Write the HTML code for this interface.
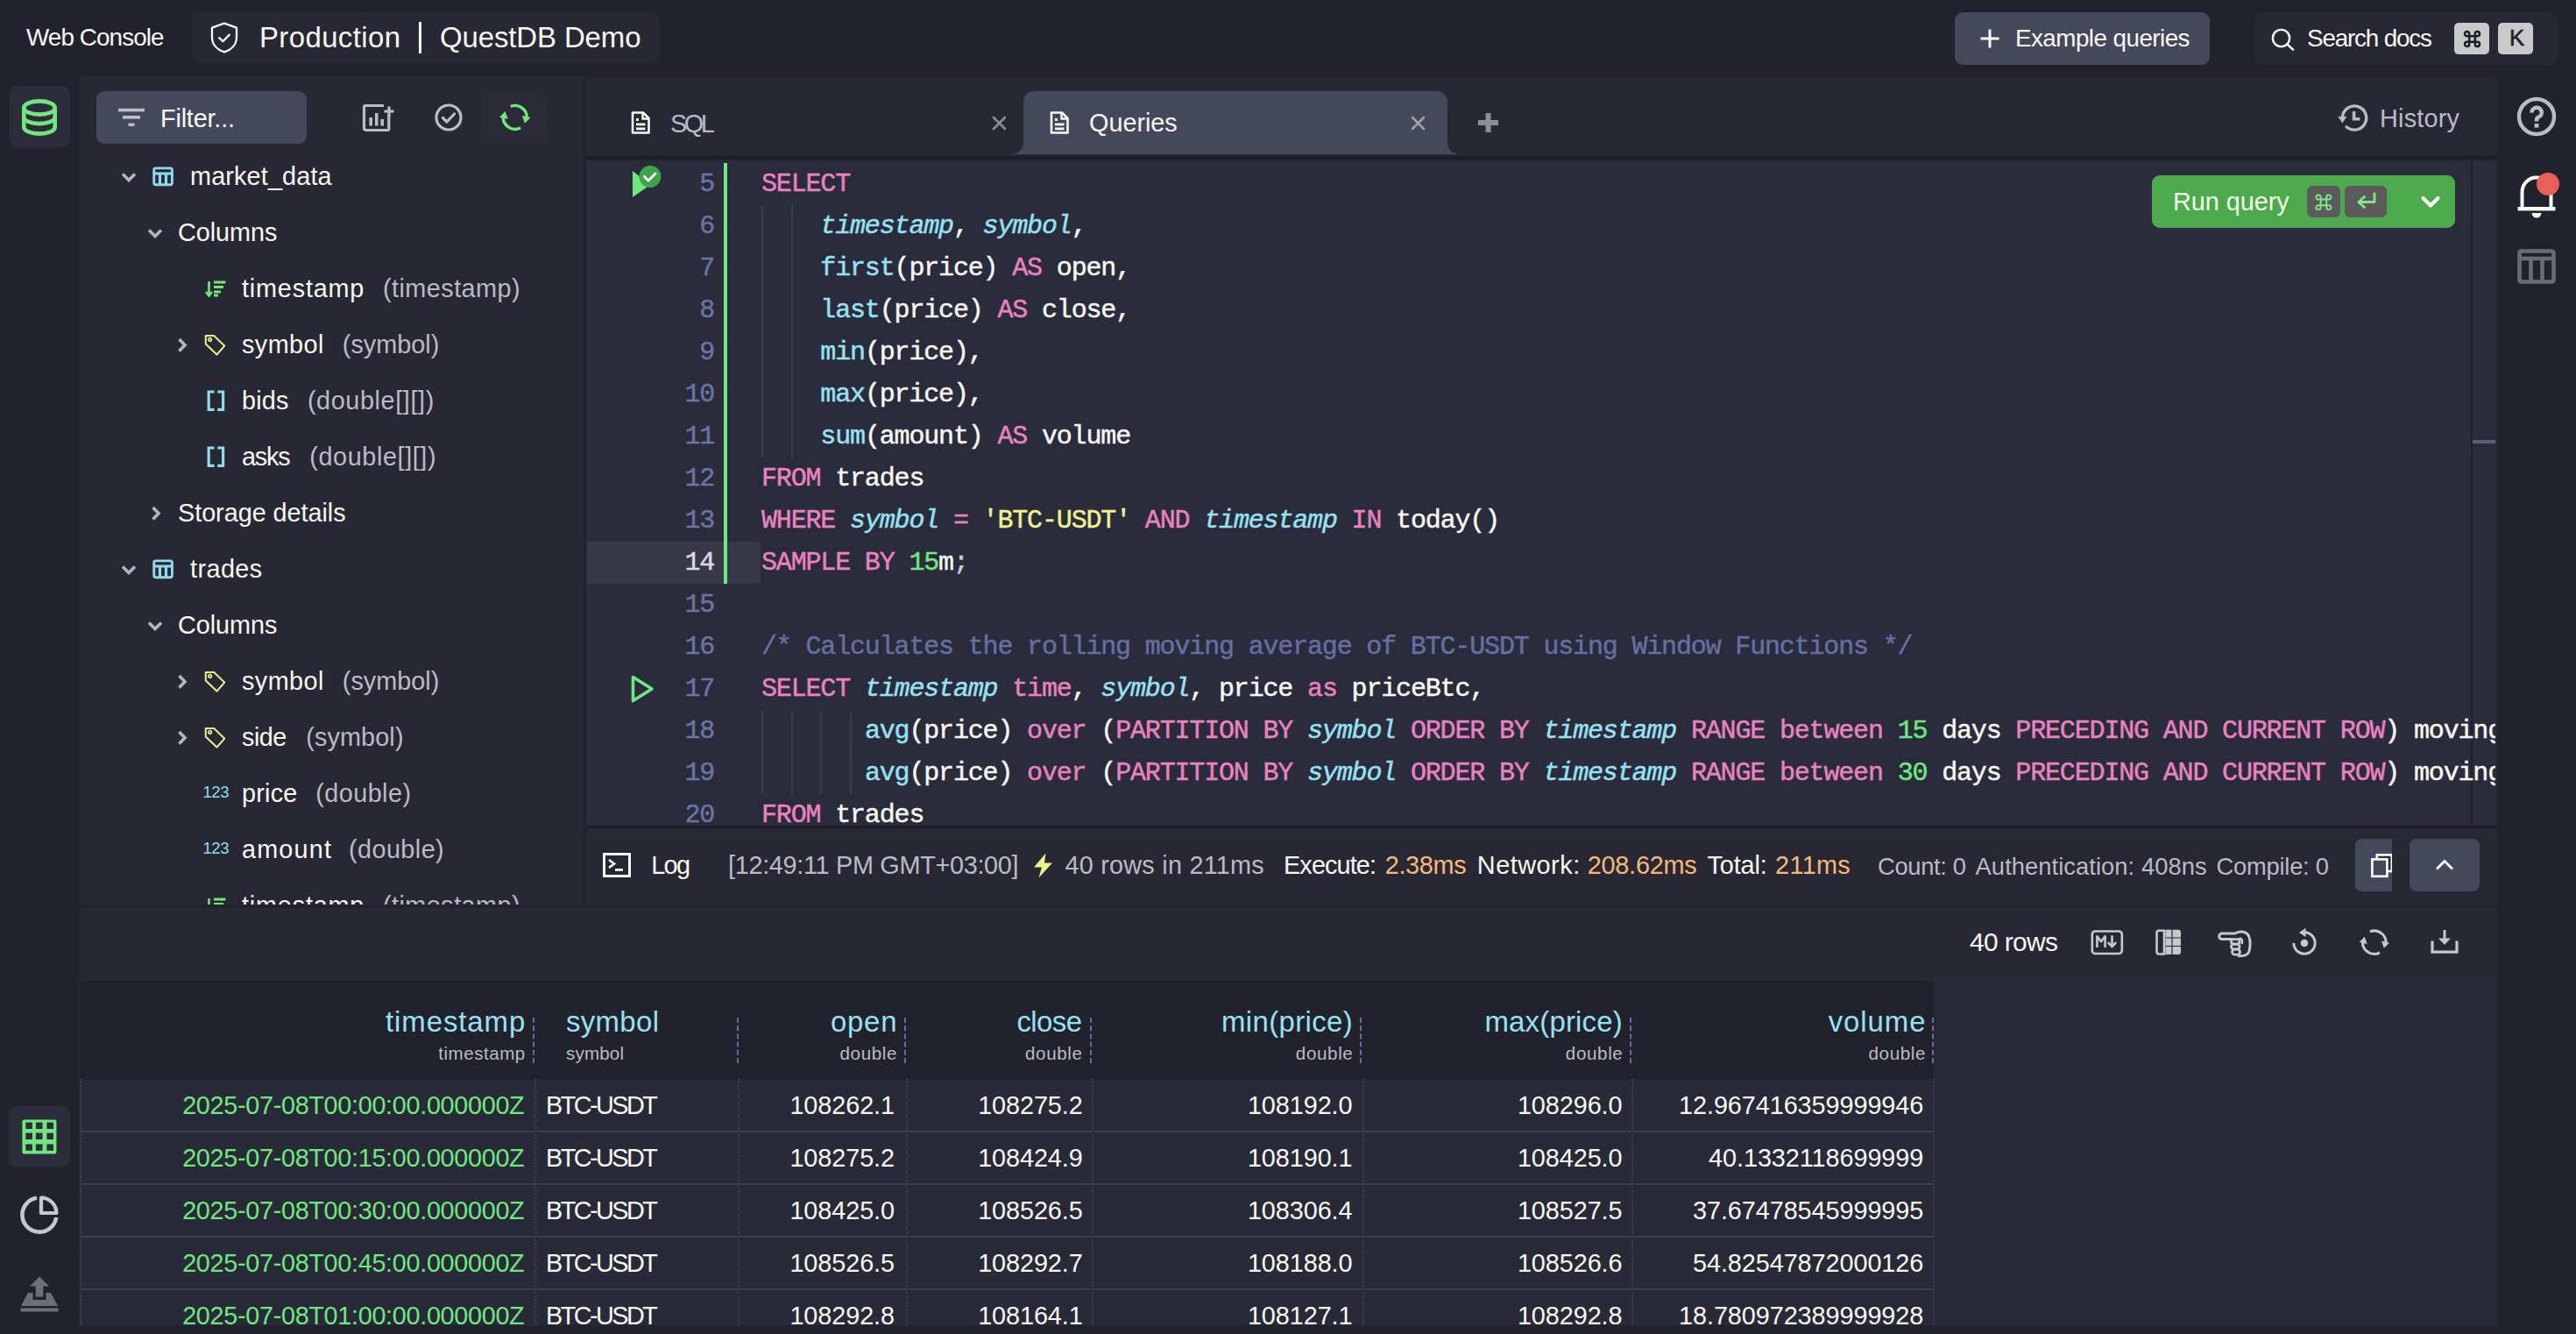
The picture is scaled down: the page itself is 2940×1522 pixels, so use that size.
<!DOCTYPE html>
<html><head><meta charset="utf-8"><style>
html,body{margin:0;padding:0;width:2940px;height:1522px;overflow:hidden;background:#21222c;}
body{position:relative;font-family:'Liberation Sans', sans-serif;}
.tx{display:block;}
</style></head><body>
<span class="tx" style="position:absolute;top:28.86px;font-family:'Liberation Sans', sans-serif;font-size:27.81px;line-height:27.81px;color:#f8f8f2;white-space:pre;letter-spacing:-0.887px;left:30px;">Web Console</span>
<div style="position:absolute;left:218px;top:13px;width:535px;height:59px;background:#272833;border-radius:10px;"></div>
<svg style="position:absolute;left:240px;top:25px;" width="32" height="36" viewBox="0 0 32 36" fill="none"><path d="M16 1.6 L30 6.6 V17.5 C30 26 23.8 31.8 16 34.4 C8.2 31.8 2 26 2 17.5 V6.6 Z" stroke="#f8f8f2" stroke-width="2.3" stroke-linejoin="round"/><path d="M10.2 18.2 L14.4 22.2 L21.8 14.6" stroke="#f8f8f2" stroke-width="2.3" stroke-linecap="round" stroke-linejoin="round"/></svg>
<span class="tx" style="position:absolute;top:26.98px;font-family:'Liberation Sans', sans-serif;font-size:32.96px;line-height:32.96px;color:#f8f8f2;white-space:pre;letter-spacing:0.383px;left:296px;">Production</span>
<div style="position:absolute;left:478px;top:25px;width:3px;height:36px;background:#f8f8f2;border-radius:0px;"></div>
<span class="tx" style="position:absolute;top:26.98px;font-family:'Liberation Sans', sans-serif;font-size:32.96px;line-height:32.96px;color:#f8f8f2;white-space:pre;letter-spacing:-0.114px;left:502px;">QuestDB Demo</span>
<div style="position:absolute;left:2231px;top:14px;width:291px;height:60px;background:#45475a;border-radius:9px;"></div>
<svg style="position:absolute;left:2259px;top:32px;" width="24" height="24" viewBox="0 0 24 24" fill="none"><path d="M12 1.5 V22.5 M1.5 12 H22.5" stroke="#f8f8f2" stroke-width="3"/></svg>
<span class="tx" style="position:absolute;top:29.86px;font-family:'Liberation Sans', sans-serif;font-size:27.81px;line-height:27.81px;color:#f8f8f2;white-space:pre;letter-spacing:-0.540px;left:2300px;">Example queries</span>
<div style="position:absolute;left:2573px;top:14px;width:346px;height:60px;background:#272833;border-radius:9px;"></div>
<svg style="position:absolute;left:2592px;top:32px;" width="28" height="26" viewBox="0 0 28 26" fill="none"><circle cx="11.5" cy="11.5" r="9.6" stroke="#f8f8f2" stroke-width="2.4"/><path d="M18.6 18.6 L25 24.6" stroke="#f8f8f2" stroke-width="2.6" stroke-linecap="round"/></svg>
<span class="tx" style="position:absolute;top:30.36px;font-family:'Liberation Sans', sans-serif;font-size:27.81px;line-height:27.81px;color:#f8f8f2;white-space:pre;letter-spacing:-1.152px;left:2633px;">Search docs</span>
<div style="position:absolute;left:2801px;top:26px;width:40px;height:36px;background:#c9c9cc;border-radius:5px;"></div>
<svg style="position:absolute;left:2811px;top:34px;" width="21" height="21" viewBox="0 0 21 21" fill="none"><path d="M7.2 7.2 H13.8 V13.8 H7.2 Z M7.2 7.2 V4.8 A2.6 2.6 0 1 0 4.6 7.2 H7.2 M13.8 7.2 H16.4 A2.6 2.6 0 1 0 13.8 4.6 V7.2 M13.8 13.8 V16.4 A2.6 2.6 0 1 0 16.4 13.8 H13.8 M7.2 13.8 H4.6 A2.6 2.6 0 1 0 7.2 16.4 V13.8" stroke="#1d1e26" stroke-width="2.5" fill="none"/></svg>
<div style="position:absolute;left:2851px;top:26px;width:40px;height:36px;background:#c9c9cc;border-radius:5px;"></div>
<span class="tx" style="position:absolute;top:31.11px;font-family:'Liberation Sans', sans-serif;font-size:25.75px;line-height:25.75px;color:#1d1e26;white-space:pre;letter-spacing:-2.181px;left:2864px;-webkit-text-stroke:0.6px #1d1e26;">K</span>
<div style="position:absolute;left:11px;top:98px;width:69px;height:70px;background:#2c2d3a;border-radius:9px;"></div>
<svg style="position:absolute;left:23px;top:111px;" width="44" height="46" viewBox="0 0 44 46" fill="none"><g transform="translate(2,2)" stroke="#72e57c" stroke-width="4.6" fill="none"><ellipse cx="20" cy="10" rx="17.7" ry="7.6"/><path d="M2.3 10 V32 A17.7 7.6 0 0 0 37.7 32 V10"/><path d="M2.3 20.5 A17.7 7.6 0 0 0 37.7 20.5"/></g></svg>
<div style="position:absolute;left:10px;top:1262px;width:70px;height:70px;background:#2c2d3a;border-radius:9px;"></div>
<svg style="position:absolute;left:25px;top:1277px;" width="40" height="40" viewBox="0 0 40 40" fill="none"><rect x="0.4" y="0.6" width="39" height="39" rx="2" fill="#72e57c"/><rect x="4.3" y="3.6" width="7.6" height="7.4" fill="#2c2d3a"/><rect x="4.3" y="15.6" width="7.6" height="7.4" fill="#2c2d3a"/><rect x="4.3" y="28.4" width="7.6" height="7.4" fill="#2c2d3a"/><rect x="15.9" y="3.6" width="7.6" height="7.4" fill="#2c2d3a"/><rect x="15.9" y="15.6" width="7.6" height="7.4" fill="#2c2d3a"/><rect x="15.9" y="28.4" width="7.6" height="7.4" fill="#2c2d3a"/><rect x="28.4" y="3.6" width="7.6" height="7.4" fill="#2c2d3a"/><rect x="28.4" y="15.6" width="7.6" height="7.4" fill="#2c2d3a"/><rect x="28.4" y="28.4" width="7.6" height="7.4" fill="#2c2d3a"/></svg>
<svg style="position:absolute;left:21px;top:1363px;" width="48" height="48" viewBox="0 0 48 48" fill="none"><path d="M21 3.8 A19.5 19.5 0 1 0 43.2 26" stroke="#c8c8cc" stroke-width="4.6" fill="none"/><path d="M26 3.6 V21 H43.4 A17.4 17.4 0 0 0 26 3.6 Z" stroke="#c8c8cc" stroke-width="4.2" stroke-linejoin="round" fill="none"/></svg>
<svg style="position:absolute;left:22px;top:1455px;" width="46" height="44" viewBox="0 0 46 44" fill="none"><path d="M23 1.5 L34 12.5 H27.3 V24.5 H18.7 V12.5 H12 Z" fill="#6e6e76"/><path d="M10 20 H15.5 V28 H30.5 V20 H36 L44 35 H2 Z" fill="#6e6e76"/><rect x="1.5" y="37.5" width="43" height="4" fill="#6e6e76"/></svg>
<div style="position:absolute;left:90px;top:87px;width:576px;height:945px;background:#272833;border-radius:0px;"></div>
<div style="position:absolute;left:110px;top:104px;width:240px;height:60px;background:#45475a;border-radius:9px;"></div>
<svg style="position:absolute;left:134px;top:122px;" width="32" height="24" viewBox="0 0 32 24" fill="none"><rect x="1" y="1.8" width="30" height="3.6" fill="#bdbdc6"/><rect x="6" y="10" width="20" height="3.6" fill="#bdbdc6"/><rect x="12.5" y="18.6" width="7" height="3.4" fill="#bdbdc6"/></svg>
<span class="tx" style="position:absolute;top:121.19px;font-family:'Liberation Sans', sans-serif;font-size:28.84px;line-height:28.84px;color:#f8f8f2;white-space:pre;letter-spacing:-0.189px;left:183px;">Filter...</span>
<svg style="position:absolute;left:413px;top:117px;" width="40" height="34" viewBox="0 0 40 34" fill="none"><path d="M25 3.5 H4 A1.8 1.8 0 0 0 2.5 5.2 V30 A1.8 1.8 0 0 0 4.2 31.5 H29 A1.8 1.8 0 0 0 30.8 29.8 V14" stroke="#bdbdc6" stroke-width="3.2" fill="none"/><path d="M31 4.5 V15.5 M25.5 10 H36.5" stroke="#bdbdc6" stroke-width="3.2"/><rect x="8.5" y="17" width="3.5" height="9.5" fill="#bdbdc6"/><rect x="15" y="12" width="3.5" height="14.5" fill="#bdbdc6"/><rect x="21.5" y="19" width="3.5" height="7.5" fill="#bdbdc6"/></svg>
<svg style="position:absolute;left:495px;top:117px;" width="34" height="34" viewBox="0 0 34 34" fill="none"><circle cx="17" cy="17" r="14" stroke="#bdbdc6" stroke-width="3.2"/><path d="M10.5 17.5 L15 22 L23.5 13" stroke="#bdbdc6" stroke-width="3.2" stroke-linecap="round" stroke-linejoin="round"/></svg>
<div style="position:absolute;left:550px;top:104px;width:75px;height:60px;background:#2a2b37;border-radius:9px;"></div>
<svg style="position:absolute;left:570px;top:117px;" width="36" height="34" viewBox="0 0 36 34" fill="none"><path d="M12.78 4.48 A13.4 13.4 0 0 1 30.91 19.69 M24.09 28.73 A13.4 13.4 0 0 1 4.69 14.11" stroke="#72e57c" stroke-width="3.4" fill="none"/><path d="M29.01 23.78 L35.57 17.00 L25.79 14.92 Z M6.59 10.02 L0.03 16.80 L9.81 18.88 Z" fill="#72e57c"/></svg>
<div style="position:absolute;left:0;top:0;width:2940px;height:1522px;clip-path:inset(87px 2274px 490px 90px)">
<svg style="position:absolute;left:137.5px;top:195.5px;" width="18" height="12" viewBox="0 0 18 12" fill="none"><path d="M2 2.5 L9 9.5 L16 2.5" stroke="#b4b4bf" stroke-width="3.6" fill="none" stroke-linecap="butt" stroke-linejoin="miter"/></svg>
<svg style="position:absolute;left:173px;top:189.5px;" width="26" height="24" viewBox="0 0 26 24" fill="none"><rect x="2.75" y="1.9" width="20.65" height="18.8" rx="2" stroke="#90daf0" stroke-width="2.9"/><path d="M2.75 8 H23.4 M9.5 8 V20.7 M16.5 8 V20.7" stroke="#90daf0" stroke-width="3.2"/></svg>
<span class="tx" style="position:absolute;top:186.99px;font-family:'Liberation Sans', sans-serif;font-size:28.84px;line-height:28.84px;color:#f8f8f2;white-space:pre;letter-spacing:0.135px;left:217px;">market_data</span>
<svg style="position:absolute;left:167.5px;top:259.5px;" width="18" height="12" viewBox="0 0 18 12" fill="none"><path d="M2 2.5 L9 9.5 L16 2.5" stroke="#b4b4bf" stroke-width="3.6" fill="none" stroke-linecap="butt" stroke-linejoin="miter"/></svg>
<span class="tx" style="position:absolute;top:250.99px;font-family:'Liberation Sans', sans-serif;font-size:28.84px;line-height:28.84px;color:#f8f8f2;white-space:pre;letter-spacing:-0.059px;left:203px;">Columns</span>
<svg style="position:absolute;left:234px;top:319.5px;" width="25" height="19" viewBox="0 0 25 19" fill="none"><path d="M4.5 1 V16.5 M1 13 L4.5 17.5 L8 13" stroke="#72e57c" stroke-width="2.6" fill="none"/><path d="M10 2 H23.5 M10 7.5 H21 M10 13 H18 M10 17 H15" stroke="#72e57c" stroke-width="2.8"/></svg>
<span class="tx" style="position:absolute;top:314.99px;font-family:'Liberation Sans', sans-serif;font-size:28.84px;line-height:28.84px;color:#f8f8f2;white-space:pre;letter-spacing:0.804px;left:276px;">timestamp</span>
<span class="tx" style="position:absolute;top:314.99px;font-family:'Liberation Sans', sans-serif;font-size:28.84px;line-height:28.84px;color:#bbbbc4;white-space:pre;letter-spacing:0.443px;left:437px;">(timestamp)</span>
<svg style="position:absolute;left:201.5px;top:385.0px;" width="12" height="18" viewBox="0 0 12 18" fill="none"><path d="M2.5 2 L9 8.7 L2.5 15.4" stroke="#b4b4bf" stroke-width="3.6" fill="none" stroke-linecap="butt" stroke-linejoin="miter"/></svg>
<svg style="position:absolute;left:233px;top:380.5px;" width="25" height="25" viewBox="0 0 25 25" fill="none"><path d="M1.8 2 H11.2 L23.2 13.6 L14.4 23.6 L1.8 11.6 Z" stroke="#e6ec90" stroke-width="2.1" stroke-linejoin="round" fill="none"/><circle cx="6.6" cy="6.4" r="1.7" stroke="#e6ec90" stroke-width="1.8"/></svg>
<span class="tx" style="position:absolute;top:378.99px;font-family:'Liberation Sans', sans-serif;font-size:28.84px;line-height:28.84px;color:#f8f8f2;white-space:pre;letter-spacing:0.417px;left:276px;">symbol</span>
<span class="tx" style="position:absolute;top:378.99px;font-family:'Liberation Sans', sans-serif;font-size:28.84px;line-height:28.84px;color:#bbbbc4;white-space:pre;letter-spacing:0.011px;left:390.8px;">(symbol)</span>
<svg style="position:absolute;left:235.5px;top:445.0px;" width="21" height="25" viewBox="0 0 21 25" fill="none"><path d="M8.6 2 H2.2 V22.3 H8.6 M12.2 2 H18.6 V22.3 H12.2" stroke="#90daf0" stroke-width="3.2" fill="none"/></svg>
<span class="tx" style="position:absolute;top:442.99px;font-family:'Liberation Sans', sans-serif;font-size:28.84px;line-height:28.84px;color:#f8f8f2;white-space:pre;letter-spacing:0.169px;left:276px;">bids</span>
<span class="tx" style="position:absolute;top:442.99px;font-family:'Liberation Sans', sans-serif;font-size:28.84px;line-height:28.84px;color:#bbbbc4;white-space:pre;letter-spacing:0.599px;left:350.9px;">(double[][])</span>
<svg style="position:absolute;left:235.5px;top:509.0px;" width="21" height="25" viewBox="0 0 21 25" fill="none"><path d="M8.6 2 H2.2 V22.3 H8.6 M12.2 2 H18.6 V22.3 H12.2" stroke="#90daf0" stroke-width="3.2" fill="none"/></svg>
<span class="tx" style="position:absolute;top:506.99px;font-family:'Liberation Sans', sans-serif;font-size:28.84px;line-height:28.84px;color:#f8f8f2;white-space:pre;letter-spacing:-1.193px;left:276px;">asks</span>
<span class="tx" style="position:absolute;top:506.99px;font-family:'Liberation Sans', sans-serif;font-size:28.84px;line-height:28.84px;color:#bbbbc4;white-space:pre;letter-spacing:0.599px;left:353.2px;">(double[][])</span>
<svg style="position:absolute;left:172px;top:577.0px;" width="12" height="18" viewBox="0 0 12 18" fill="none"><path d="M2.5 2 L9 8.7 L2.5 15.4" stroke="#b4b4bf" stroke-width="3.6" fill="none" stroke-linecap="butt" stroke-linejoin="miter"/></svg>
<span class="tx" style="position:absolute;top:570.99px;font-family:'Liberation Sans', sans-serif;font-size:28.84px;line-height:28.84px;color:#f8f8f2;white-space:pre;letter-spacing:-0.051px;left:203px;">Storage details</span>
<svg style="position:absolute;left:137.5px;top:643.5px;" width="18" height="12" viewBox="0 0 18 12" fill="none"><path d="M2 2.5 L9 9.5 L16 2.5" stroke="#b4b4bf" stroke-width="3.6" fill="none" stroke-linecap="butt" stroke-linejoin="miter"/></svg>
<svg style="position:absolute;left:173px;top:637.5px;" width="26" height="24" viewBox="0 0 26 24" fill="none"><rect x="2.75" y="1.9" width="20.65" height="18.8" rx="2" stroke="#90daf0" stroke-width="2.9"/><path d="M2.75 8 H23.4 M9.5 8 V20.7 M16.5 8 V20.7" stroke="#90daf0" stroke-width="3.2"/></svg>
<span class="tx" style="position:absolute;top:634.99px;font-family:'Liberation Sans', sans-serif;font-size:28.84px;line-height:28.84px;color:#f8f8f2;white-space:pre;letter-spacing:0.415px;left:217px;">trades</span>
<svg style="position:absolute;left:167.5px;top:707.5px;" width="18" height="12" viewBox="0 0 18 12" fill="none"><path d="M2 2.5 L9 9.5 L16 2.5" stroke="#b4b4bf" stroke-width="3.6" fill="none" stroke-linecap="butt" stroke-linejoin="miter"/></svg>
<span class="tx" style="position:absolute;top:698.99px;font-family:'Liberation Sans', sans-serif;font-size:28.84px;line-height:28.84px;color:#f8f8f2;white-space:pre;letter-spacing:-0.059px;left:203px;">Columns</span>
<svg style="position:absolute;left:201.5px;top:769.0px;" width="12" height="18" viewBox="0 0 12 18" fill="none"><path d="M2.5 2 L9 8.7 L2.5 15.4" stroke="#b4b4bf" stroke-width="3.6" fill="none" stroke-linecap="butt" stroke-linejoin="miter"/></svg>
<svg style="position:absolute;left:233px;top:764.5px;" width="25" height="25" viewBox="0 0 25 25" fill="none"><path d="M1.8 2 H11.2 L23.2 13.6 L14.4 23.6 L1.8 11.6 Z" stroke="#e6ec90" stroke-width="2.1" stroke-linejoin="round" fill="none"/><circle cx="6.6" cy="6.4" r="1.7" stroke="#e6ec90" stroke-width="1.8"/></svg>
<span class="tx" style="position:absolute;top:762.99px;font-family:'Liberation Sans', sans-serif;font-size:28.84px;line-height:28.84px;color:#f8f8f2;white-space:pre;letter-spacing:0.417px;left:276px;">symbol</span>
<span class="tx" style="position:absolute;top:762.99px;font-family:'Liberation Sans', sans-serif;font-size:28.84px;line-height:28.84px;color:#bbbbc4;white-space:pre;letter-spacing:0.011px;left:390.8px;">(symbol)</span>
<svg style="position:absolute;left:201.5px;top:833.0px;" width="12" height="18" viewBox="0 0 12 18" fill="none"><path d="M2.5 2 L9 8.7 L2.5 15.4" stroke="#b4b4bf" stroke-width="3.6" fill="none" stroke-linecap="butt" stroke-linejoin="miter"/></svg>
<svg style="position:absolute;left:233px;top:828.5px;" width="25" height="25" viewBox="0 0 25 25" fill="none"><path d="M1.8 2 H11.2 L23.2 13.6 L14.4 23.6 L1.8 11.6 Z" stroke="#e6ec90" stroke-width="2.1" stroke-linejoin="round" fill="none"/><circle cx="6.6" cy="6.4" r="1.7" stroke="#e6ec90" stroke-width="1.8"/></svg>
<span class="tx" style="position:absolute;top:826.99px;font-family:'Liberation Sans', sans-serif;font-size:28.84px;line-height:28.84px;color:#f8f8f2;white-space:pre;letter-spacing:-0.496px;left:276px;">side</span>
<span class="tx" style="position:absolute;top:826.99px;font-family:'Liberation Sans', sans-serif;font-size:28.84px;line-height:28.84px;color:#bbbbc4;white-space:pre;letter-spacing:0.111px;left:349.2px;">(symbol)</span>
<span class="tx" style="position:absolute;top:895.24px;font-family:'Liberation Sans', sans-serif;font-size:18.54px;line-height:18.54px;color:#90daf0;white-space:pre;letter-spacing:-0.450px;left:231.5px;">123</span>
<span class="tx" style="position:absolute;top:890.99px;font-family:'Liberation Sans', sans-serif;font-size:28.84px;line-height:28.84px;color:#f8f8f2;white-space:pre;letter-spacing:0.226px;left:276px;">price</span>
<span class="tx" style="position:absolute;top:890.99px;font-family:'Liberation Sans', sans-serif;font-size:28.84px;line-height:28.84px;color:#bbbbc4;white-space:pre;letter-spacing:0.417px;left:360.3px;">(double)</span>
<span class="tx" style="position:absolute;top:959.24px;font-family:'Liberation Sans', sans-serif;font-size:18.54px;line-height:18.54px;color:#90daf0;white-space:pre;letter-spacing:-0.450px;left:231.5px;">123</span>
<span class="tx" style="position:absolute;top:954.99px;font-family:'Liberation Sans', sans-serif;font-size:28.84px;line-height:28.84px;color:#f8f8f2;white-space:pre;letter-spacing:1.146px;left:276px;">amount</span>
<span class="tx" style="position:absolute;top:954.99px;font-family:'Liberation Sans', sans-serif;font-size:28.84px;line-height:28.84px;color:#bbbbc4;white-space:pre;letter-spacing:0.417px;left:398px;">(double)</span>
<svg style="position:absolute;left:234px;top:1023.5px;" width="25" height="19" viewBox="0 0 25 19" fill="none"><path d="M4.5 1 V16.5 M1 13 L4.5 17.5 L8 13" stroke="#72e57c" stroke-width="2.6" fill="none"/><path d="M10 2 H23.5 M10 7.5 H21 M10 13 H18 M10 17 H15" stroke="#72e57c" stroke-width="2.8"/></svg>
<span class="tx" style="position:absolute;top:1018.99px;font-family:'Liberation Sans', sans-serif;font-size:28.84px;line-height:28.84px;color:#f8f8f2;white-space:pre;letter-spacing:0.803px;left:276px;">timestamp</span>
<span class="tx" style="position:absolute;top:1018.99px;font-family:'Liberation Sans', sans-serif;font-size:28.84px;line-height:28.84px;color:#bbbbc4;white-space:pre;letter-spacing:0.443px;left:437px;">(timestamp)</span>
</div>
<div style="position:absolute;left:669px;top:88px;width:2181px;height:91px;background:#262834;border-radius:0px;"></div>
<svg style="position:absolute;left:720px;top:127px;" width="23" height="27" viewBox="0 0 23 27" fill="none"><path d="M2 1.5 H14 L20.5 8 V24.5 H2 Z" stroke="#f8f8f2" stroke-width="2.6" stroke-linejoin="round" fill="none"/><path d="M13.5 1.5 V8.5 H20.5" stroke="#f8f8f2" stroke-width="2.4" fill="none"/><rect x="6" y="8" width="3" height="3" fill="#f8f8f2"/><rect x="6" y="13.5" width="10.5" height="2.8" fill="#f8f8f2"/><rect x="6" y="18.5" width="10.5" height="2.8" fill="#f8f8f2"/></svg>
<span class="tx" style="position:absolute;top:126.79px;font-family:'Liberation Sans', sans-serif;font-size:28.84px;line-height:28.84px;color:#bbbbc4;white-space:pre;letter-spacing:-3.446px;left:765px;">SQL</span>
<svg style="position:absolute;left:1131.5px;top:131.5px;" width="17" height="17" viewBox="0 0 17 17" fill="none"><path d="M2 2 L15 15 M15 2 L2 15" stroke="#8e8e9a" stroke-width="2.6" stroke-linecap="round"/></svg>
<svg style="position:absolute;left:1148px;top:103px;" width="524" height="74" viewBox="0 0 524 74" fill="none"><path d="M2 73 C14 73 20 69 20 58 V13 A12 12 0 0 1 32 1 H492 A12 12 0 0 1 504 13 V58 C504 69 510 73 522 73 Z" fill="#45475a"/></svg>
<svg style="position:absolute;left:1198px;top:127px;" width="23" height="27" viewBox="0 0 23 27" fill="none"><path d="M2 1.5 H14 L20.5 8 V24.5 H2 Z" stroke="#f8f8f2" stroke-width="2.6" stroke-linejoin="round" fill="none"/><path d="M13.5 1.5 V8.5 H20.5" stroke="#f8f8f2" stroke-width="2.4" fill="none"/><rect x="6" y="8" width="3" height="3" fill="#f8f8f2"/><rect x="6" y="13.5" width="10.5" height="2.8" fill="#f8f8f2"/><rect x="6" y="18.5" width="10.5" height="2.8" fill="#f8f8f2"/></svg>
<span class="tx" style="position:absolute;top:126.29px;font-family:'Liberation Sans', sans-serif;font-size:28.84px;line-height:28.84px;color:#f8f8f2;white-space:pre;letter-spacing:-0.026px;left:1243px;">Queries</span>
<svg style="position:absolute;left:1609.5px;top:131.5px;" width="17" height="17" viewBox="0 0 17 17" fill="none"><path d="M2 2 L15 15 M15 2 L2 15" stroke="#a0a0ab" stroke-width="2.6" stroke-linecap="round"/></svg>
<svg style="position:absolute;left:1686px;top:128px;" width="25" height="24" viewBox="0 0 25 24" fill="none"><path d="M12.5 1 V23 M1 12 H24" stroke="#8e8e9a" stroke-width="6"/></svg>
<svg style="position:absolute;left:2667px;top:116px;" width="38" height="38" viewBox="0 0 38 38" fill="none"><path d="M10.2 27.9 A13.6 13.6 0 1 0 6.5 17.6" stroke="#bbbbc4" stroke-width="3.4" fill="none"/><path d="M1.4 17 H11.4 L6.4 24.6 Z" fill="#bbbbc4"/><path d="M19.6 11 V19.8 H26.4" stroke="#bbbbc4" stroke-width="3.6" fill="none"/></svg>
<span class="tx" style="position:absolute;top:121.49px;font-family:'Liberation Sans', sans-serif;font-size:28.84px;line-height:28.84px;color:#bbbbc4;white-space:pre;letter-spacing:0.217px;left:2716px;">History</span>
<div style="position:absolute;left:669px;top:178px;width:2181px;height:6px;background:linear-gradient(#20212b 0%, #1b1c26 40%, #2a2c3b 100%);border-radius:0px;"></div>
<div style="position:absolute;left:669px;top:184px;width:2181px;height:758px;background:#2a2c3b;border-radius:0px;"></div>
<div style="position:absolute;left:670px;top:618px;width:198px;height:48px;background:#373949;border-radius:0px;"></div>
<div style="position:absolute;left:826px;top:186px;width:4px;height:480px;background:#6ee87f;border-radius:0px;"></div>
<div style="position:absolute;left:2820px;top:182px;width:2px;height:760px;background:#1f2030;border-radius:0px;"></div>
<div style="position:absolute;left:2822px;top:502px;width:26px;height:4px;background:#5c5e72;border-radius:0px;"></div>
<span class="tx" style="position:absolute;top:195.45px;font-family:'Liberation Mono', monospace;font-size:30px;line-height:30px;color:#6b74a3;white-space:pre;letter-spacing:0.000px;right:2125px;letter-spacing:-1.2px;-webkit-text-stroke-width:0.45px;">5</span>
<span class="tx" style="position:absolute;top:243.45px;font-family:'Liberation Mono', monospace;font-size:30px;line-height:30px;color:#6b74a3;white-space:pre;letter-spacing:0.000px;right:2125px;letter-spacing:-1.2px;-webkit-text-stroke-width:0.45px;">6</span>
<span class="tx" style="position:absolute;top:291.45px;font-family:'Liberation Mono', monospace;font-size:30px;line-height:30px;color:#6b74a3;white-space:pre;letter-spacing:0.000px;right:2125px;letter-spacing:-1.2px;-webkit-text-stroke-width:0.45px;">7</span>
<span class="tx" style="position:absolute;top:339.45px;font-family:'Liberation Mono', monospace;font-size:30px;line-height:30px;color:#6b74a3;white-space:pre;letter-spacing:0.000px;right:2125px;letter-spacing:-1.2px;-webkit-text-stroke-width:0.45px;">8</span>
<span class="tx" style="position:absolute;top:387.45px;font-family:'Liberation Mono', monospace;font-size:30px;line-height:30px;color:#6b74a3;white-space:pre;letter-spacing:0.000px;right:2125px;letter-spacing:-1.2px;-webkit-text-stroke-width:0.45px;">9</span>
<span class="tx" style="position:absolute;top:435.45px;font-family:'Liberation Mono', monospace;font-size:30px;line-height:30px;color:#6b74a3;white-space:pre;letter-spacing:0.000px;right:2125px;letter-spacing:-1.2px;-webkit-text-stroke-width:0.45px;">10</span>
<span class="tx" style="position:absolute;top:483.45px;font-family:'Liberation Mono', monospace;font-size:30px;line-height:30px;color:#6b74a3;white-space:pre;letter-spacing:0.000px;right:2125px;letter-spacing:-1.2px;-webkit-text-stroke-width:0.45px;">11</span>
<span class="tx" style="position:absolute;top:531.45px;font-family:'Liberation Mono', monospace;font-size:30px;line-height:30px;color:#6b74a3;white-space:pre;letter-spacing:0.000px;right:2125px;letter-spacing:-1.2px;-webkit-text-stroke-width:0.45px;">12</span>
<span class="tx" style="position:absolute;top:579.45px;font-family:'Liberation Mono', monospace;font-size:30px;line-height:30px;color:#6b74a3;white-space:pre;letter-spacing:0.000px;right:2125px;letter-spacing:-1.2px;-webkit-text-stroke-width:0.45px;">13</span>
<span class="tx" style="position:absolute;top:627.45px;font-family:'Liberation Mono', monospace;font-size:30px;line-height:30px;color:#dcdce4;white-space:pre;letter-spacing:0.000px;right:2125px;letter-spacing:-1.2px;-webkit-text-stroke-width:0.45px;">14</span>
<span class="tx" style="position:absolute;top:675.45px;font-family:'Liberation Mono', monospace;font-size:30px;line-height:30px;color:#6b74a3;white-space:pre;letter-spacing:0.000px;right:2125px;letter-spacing:-1.2px;-webkit-text-stroke-width:0.45px;">15</span>
<span class="tx" style="position:absolute;top:723.45px;font-family:'Liberation Mono', monospace;font-size:30px;line-height:30px;color:#6b74a3;white-space:pre;letter-spacing:0.000px;right:2125px;letter-spacing:-1.2px;-webkit-text-stroke-width:0.45px;">16</span>
<span class="tx" style="position:absolute;top:771.45px;font-family:'Liberation Mono', monospace;font-size:30px;line-height:30px;color:#6b74a3;white-space:pre;letter-spacing:0.000px;right:2125px;letter-spacing:-1.2px;-webkit-text-stroke-width:0.45px;">17</span>
<span class="tx" style="position:absolute;top:819.45px;font-family:'Liberation Mono', monospace;font-size:30px;line-height:30px;color:#6b74a3;white-space:pre;letter-spacing:0.000px;right:2125px;letter-spacing:-1.2px;-webkit-text-stroke-width:0.45px;">18</span>
<span class="tx" style="position:absolute;top:867.45px;font-family:'Liberation Mono', monospace;font-size:30px;line-height:30px;color:#6b74a3;white-space:pre;letter-spacing:0.000px;right:2125px;letter-spacing:-1.2px;-webkit-text-stroke-width:0.45px;">19</span>
<span class="tx" style="position:absolute;top:915.45px;font-family:'Liberation Mono', monospace;font-size:30px;line-height:30px;color:#6b74a3;white-space:pre;letter-spacing:0.000px;right:2125px;letter-spacing:-1.2px;-webkit-text-stroke-width:0.45px;">20</span>
<svg style="position:absolute;left:720px;top:186px;" width="50" height="44" viewBox="0 0 50 44" fill="none"><path d="M2 9 L22 25 L2 39 Z" fill="#6ee87f"/><circle cx="22" cy="15.5" r="12.5" fill="#3fa34a"/><path d="M15.5 15.5 L20 20 L28 12" stroke="#f8f8f2" stroke-width="3" fill="none" stroke-linecap="round" stroke-linejoin="round"/></svg>
<svg style="position:absolute;left:719px;top:769px;" width="30" height="34" viewBox="0 0 30 34" fill="none"><path d="M3.5 3.5 L25 17 L3.5 30.5 Z" stroke="#6ee87f" stroke-width="3.6" stroke-linejoin="round" fill="none"/></svg>
<div style="position:absolute;left:869px;top:233.99999999999997px;width:2px;height:48.00000000000003px;background:#3b3d45;border-radius:0px;"></div>
<div style="position:absolute;left:903px;top:233.99999999999997px;width:2px;height:48.00000000000003px;background:#3b3d45;border-radius:0px;"></div>
<div style="position:absolute;left:869px;top:282.0px;width:2px;height:48.0px;background:#3b3d45;border-radius:0px;"></div>
<div style="position:absolute;left:903px;top:282.0px;width:2px;height:48.0px;background:#3b3d45;border-radius:0px;"></div>
<div style="position:absolute;left:869px;top:330.0px;width:2px;height:48.0px;background:#3b3d45;border-radius:0px;"></div>
<div style="position:absolute;left:903px;top:330.0px;width:2px;height:48.0px;background:#3b3d45;border-radius:0px;"></div>
<div style="position:absolute;left:869px;top:378.0px;width:2px;height:48.0px;background:#3b3d45;border-radius:0px;"></div>
<div style="position:absolute;left:903px;top:378.0px;width:2px;height:48.0px;background:#3b3d45;border-radius:0px;"></div>
<div style="position:absolute;left:869px;top:426.0px;width:2px;height:48.0px;background:#3b3d45;border-radius:0px;"></div>
<div style="position:absolute;left:903px;top:426.0px;width:2px;height:48.0px;background:#3b3d45;border-radius:0px;"></div>
<div style="position:absolute;left:869px;top:474.0px;width:2px;height:48.0px;background:#3b3d45;border-radius:0px;"></div>
<div style="position:absolute;left:903px;top:474.0px;width:2px;height:48.0px;background:#3b3d45;border-radius:0px;"></div>
<div style="position:absolute;left:869px;top:810.0px;width:2px;height:48.0px;background:#3b3d45;border-radius:0px;"></div>
<div style="position:absolute;left:903px;top:810.0px;width:2px;height:48.0px;background:#3b3d45;border-radius:0px;"></div>
<div style="position:absolute;left:936px;top:810.0px;width:2px;height:48.0px;background:#3b3d45;border-radius:0px;"></div>
<div style="position:absolute;left:970px;top:810.0px;width:2px;height:48.0px;background:#3b3d45;border-radius:0px;"></div>
<div style="position:absolute;left:869px;top:858.0px;width:2px;height:48.0px;background:#3b3d45;border-radius:0px;"></div>
<div style="position:absolute;left:903px;top:858.0px;width:2px;height:48.0px;background:#3b3d45;border-radius:0px;"></div>
<div style="position:absolute;left:936px;top:858.0px;width:2px;height:48.0px;background:#3b3d45;border-radius:0px;"></div>
<div style="position:absolute;left:970px;top:858.0px;width:2px;height:48.0px;background:#3b3d45;border-radius:0px;"></div>
<div style="position:absolute;left:0;top:0;width:2940px;height:1522px;clip-path:inset(182px 92px 580px 669px)">
<div style="position:absolute;left:869px;top:195.45px;font-family:'Liberation Mono', monospace;font-size:30px;line-height:30px;letter-spacing:-1.165px;white-space:pre;-webkit-text-stroke-width:0.45px"><span style="color:#ea82c0;">SELECT</span></div>
<div style="position:absolute;left:869px;top:243.45px;font-family:'Liberation Mono', monospace;font-size:30px;line-height:30px;letter-spacing:-1.165px;white-space:pre;-webkit-text-stroke-width:0.45px"><span style="color:#f8f8f2;">    </span><span style="color:#98e1f2;font-style:italic;">timestamp</span><span style="color:#f8f8f2;">, </span><span style="color:#98e1f2;font-style:italic;">symbol</span><span style="color:#f8f8f2;">,</span></div>
<div style="position:absolute;left:869px;top:291.45px;font-family:'Liberation Mono', monospace;font-size:30px;line-height:30px;letter-spacing:-1.165px;white-space:pre;-webkit-text-stroke-width:0.45px"><span style="color:#f8f8f2;">    </span><span style="color:#98e1f2;">first</span><span style="color:#f8f8f2;">(price) </span><span style="color:#ea82c0;">AS</span><span style="color:#f8f8f2;"> open,</span></div>
<div style="position:absolute;left:869px;top:339.45px;font-family:'Liberation Mono', monospace;font-size:30px;line-height:30px;letter-spacing:-1.165px;white-space:pre;-webkit-text-stroke-width:0.45px"><span style="color:#f8f8f2;">    </span><span style="color:#98e1f2;">last</span><span style="color:#f8f8f2;">(price) </span><span style="color:#ea82c0;">AS</span><span style="color:#f8f8f2;"> close,</span></div>
<div style="position:absolute;left:869px;top:387.45px;font-family:'Liberation Mono', monospace;font-size:30px;line-height:30px;letter-spacing:-1.165px;white-space:pre;-webkit-text-stroke-width:0.45px"><span style="color:#f8f8f2;">    </span><span style="color:#98e1f2;">min</span><span style="color:#f8f8f2;">(price),</span></div>
<div style="position:absolute;left:869px;top:435.45px;font-family:'Liberation Mono', monospace;font-size:30px;line-height:30px;letter-spacing:-1.165px;white-space:pre;-webkit-text-stroke-width:0.45px"><span style="color:#f8f8f2;">    </span><span style="color:#98e1f2;">max</span><span style="color:#f8f8f2;">(price),</span></div>
<div style="position:absolute;left:869px;top:483.45px;font-family:'Liberation Mono', monospace;font-size:30px;line-height:30px;letter-spacing:-1.165px;white-space:pre;-webkit-text-stroke-width:0.45px"><span style="color:#f8f8f2;">    </span><span style="color:#98e1f2;">sum</span><span style="color:#f8f8f2;">(amount) </span><span style="color:#ea82c0;">AS</span><span style="color:#f8f8f2;"> volume</span></div>
<div style="position:absolute;left:869px;top:531.45px;font-family:'Liberation Mono', monospace;font-size:30px;line-height:30px;letter-spacing:-1.165px;white-space:pre;-webkit-text-stroke-width:0.45px"><span style="color:#ea82c0;">FROM</span><span style="color:#f8f8f2;"> trades</span></div>
<div style="position:absolute;left:869px;top:579.45px;font-family:'Liberation Mono', monospace;font-size:30px;line-height:30px;letter-spacing:-1.165px;white-space:pre;-webkit-text-stroke-width:0.45px"><span style="color:#ea82c0;">WHERE</span><span style="color:#f8f8f2;"> </span><span style="color:#98e1f2;font-style:italic;">symbol</span><span style="color:#f8f8f2;"> </span><span style="color:#ea82c0;">=</span><span style="color:#f8f8f2;"> </span><span style="color:#eef38e;">'BTC-USDT'</span><span style="color:#f8f8f2;"> </span><span style="color:#ea82c0;">AND</span><span style="color:#f8f8f2;"> </span><span style="color:#98e1f2;font-style:italic;">timestamp</span><span style="color:#f8f8f2;"> </span><span style="color:#ea82c0;">IN</span><span style="color:#f8f8f2;"> today()</span></div>
<div style="position:absolute;left:869px;top:627.45px;font-family:'Liberation Mono', monospace;font-size:30px;line-height:30px;letter-spacing:-1.165px;white-space:pre;-webkit-text-stroke-width:0.45px"><span style="color:#ea82c0;">SAMPLE BY</span><span style="color:#f8f8f2;"> </span><span style="color:#6ee87f;">15</span><span style="color:#f8f8f2;">m</span><span style="color:#cfcfd8;">;</span></div>
<div style="position:absolute;left:869px;top:723.45px;font-family:'Liberation Mono', monospace;font-size:30px;line-height:30px;letter-spacing:-1.165px;white-space:pre;-webkit-text-stroke-width:0.45px"><span style="color:#6470a2;">/* Calculates the rolling moving average of BTC-USDT using Window Functions */</span></div>
<div style="position:absolute;left:869px;top:771.45px;font-family:'Liberation Mono', monospace;font-size:30px;line-height:30px;letter-spacing:-1.165px;white-space:pre;-webkit-text-stroke-width:0.45px"><span style="color:#ea82c0;">SELECT</span><span style="color:#f8f8f2;"> </span><span style="color:#98e1f2;font-style:italic;">timestamp</span><span style="color:#f8f8f2;"> </span><span style="color:#ea82c0;">time</span><span style="color:#f8f8f2;">, </span><span style="color:#98e1f2;font-style:italic;">symbol</span><span style="color:#f8f8f2;">, price </span><span style="color:#ea82c0;">as</span><span style="color:#f8f8f2;"> priceBtc,</span></div>
<div style="position:absolute;left:869px;top:819.45px;font-family:'Liberation Mono', monospace;font-size:30px;line-height:30px;letter-spacing:-1.165px;white-space:pre;-webkit-text-stroke-width:0.45px"><span style="color:#f8f8f2;">       </span><span style="color:#98e1f2;">avg</span><span style="color:#f8f8f2;">(price) </span><span style="color:#ea82c0;">over</span><span style="color:#f8f8f2;"> (</span><span style="color:#ea82c0;">PARTITION BY</span><span style="color:#f8f8f2;"> </span><span style="color:#98e1f2;font-style:italic;">symbol</span><span style="color:#f8f8f2;"> </span><span style="color:#ea82c0;">ORDER BY</span><span style="color:#f8f8f2;"> </span><span style="color:#98e1f2;font-style:italic;">timestamp</span><span style="color:#f8f8f2;"> </span><span style="color:#ea82c0;">RANGE between</span><span style="color:#f8f8f2;"> </span><span style="color:#6ee87f;">15</span><span style="color:#f8f8f2;"> days </span><span style="color:#ea82c0;">PRECEDING AND CURRENT ROW</span><span style="color:#f8f8f2;">) movingAvg15Days,</span></div>
<div style="position:absolute;left:869px;top:867.45px;font-family:'Liberation Mono', monospace;font-size:30px;line-height:30px;letter-spacing:-1.165px;white-space:pre;-webkit-text-stroke-width:0.45px"><span style="color:#f8f8f2;">       </span><span style="color:#98e1f2;">avg</span><span style="color:#f8f8f2;">(price) </span><span style="color:#ea82c0;">over</span><span style="color:#f8f8f2;"> (</span><span style="color:#ea82c0;">PARTITION BY</span><span style="color:#f8f8f2;"> </span><span style="color:#98e1f2;font-style:italic;">symbol</span><span style="color:#f8f8f2;"> </span><span style="color:#ea82c0;">ORDER BY</span><span style="color:#f8f8f2;"> </span><span style="color:#98e1f2;font-style:italic;">timestamp</span><span style="color:#f8f8f2;"> </span><span style="color:#ea82c0;">RANGE between</span><span style="color:#f8f8f2;"> </span><span style="color:#6ee87f;">30</span><span style="color:#f8f8f2;"> days </span><span style="color:#ea82c0;">PRECEDING AND CURRENT ROW</span><span style="color:#f8f8f2;">) movingAvg30Days</span></div>
<div style="position:absolute;left:869px;top:915.45px;font-family:'Liberation Mono', monospace;font-size:30px;line-height:30px;letter-spacing:-1.165px;white-space:pre;-webkit-text-stroke-width:0.45px"><span style="color:#ea82c0;">FROM</span><span style="color:#f8f8f2;"> trades</span></div>
</div>
<div style="position:absolute;left:2456px;top:200px;width:346px;height:60px;background:#4caa4c;border-radius:9px;"></div>
<span class="tx" style="position:absolute;top:216.49px;font-family:'Liberation Sans', sans-serif;font-size:28.84px;line-height:28.84px;color:#f2fbea;white-space:pre;letter-spacing:-0.052px;left:2480px;">Run query</span>
<div style="position:absolute;left:2633px;top:212px;width:38px;height:36px;background:#5b5b5b;border-radius:6px;"></div>
<svg style="position:absolute;left:2642px;top:221px;" width="20" height="19" viewBox="0 0 20 19" fill="none"><path d="M6.6 6.6 H13.2 V13.2 H6.6 Z M6.6 6.6 V4.2 A2.6 2.6 0 1 0 4 6.6 H6.6 M13.2 6.6 H15.6 A2.6 2.6 0 1 0 13.2 4.2 V6.6 M13.2 13.2 V15.6 A2.6 2.6 0 1 0 15.6 13.2 H13.2 M6.6 13.2 H4 A2.6 2.6 0 1 0 6.6 15.6 V13.2" stroke="#7fe887" stroke-width="2" fill="none"/></svg>
<div style="position:absolute;left:2676px;top:212px;width:48px;height:36px;background:#5b5b5b;border-radius:6px;"></div>
<svg style="position:absolute;left:2688px;top:218px;" width="26" height="24" viewBox="0 0 26 24" fill="none"><path d="M22 3 V12.5 H5 M10.5 6.5 L4 12.5 L10.5 18.5" stroke="#7fe887" stroke-width="2.8" fill="none" stroke-linecap="round" stroke-linejoin="round"/></svg>
<svg style="position:absolute;left:2762px;top:222px;" width="24" height="18" viewBox="0 0 24 18" fill="none"><path d="M3.5 4 L12 12.5 L20.5 4" stroke="#f8f8f2" stroke-width="4.2" fill="none" stroke-linecap="round" stroke-linejoin="round"/></svg>
<svg style="position:absolute;left:2871px;top:109px;" width="48" height="48" viewBox="0 0 48 48" fill="none"><circle cx="24" cy="24" r="20" stroke="#bbbbc4" stroke-width="4.4"/><path d="M18.6 19.6 A5.6 5.6 0 1 1 26.2 24.6 C24.6 25.4 24 26.4 24 28.2 V29.4" stroke="#bbbbc4" stroke-width="4.6" fill="none"/><rect x="21.6" y="32" width="4.8" height="4.6" fill="#bbbbc4"/></svg>
<svg style="position:absolute;left:2871px;top:196px;" width="54" height="56" viewBox="0 0 54 56" fill="none"><path d="M7.5 42 V23 A16.5 16.5 0 0 1 40.5 23 V42" stroke="#f8f8f2" stroke-width="4" fill="none"/><rect x="2.5" y="40" width="43" height="4.4" fill="#f8f8f2"/><path d="M18.5 47 H29.5 A5.5 5.5 0 0 1 18.5 47 Z" fill="#f8f8f2"/><circle cx="37" cy="14" r="13" fill="#e9605a"/></svg>
<svg style="position:absolute;left:2871px;top:282px;" width="48" height="44" viewBox="0 0 48 44" fill="none"><rect x="4.5" y="4.5" width="39" height="35" rx="2" stroke="#6b6b72" stroke-width="4.6"/><path d="M4.5 13 H43.5 M17.5 13 V39.5 M30.5 13 V39.5" stroke="#6b6b72" stroke-width="4.6"/></svg>
<div style="position:absolute;left:669px;top:942px;width:2181px;height:3px;background:#1c1d27;border-radius:0px;"></div>
<div style="position:absolute;left:669px;top:945px;width:2181px;height:87px;background:#272833;border-radius:0px;"></div>
<svg style="position:absolute;left:687px;top:972px;" width="34" height="30" viewBox="0 0 34 30" fill="none"><rect x="2.5" y="2.5" width="29" height="25" stroke="#f8f8f2" stroke-width="3" fill="none"/><path d="M8 9 L14 13.5 L8 18" stroke="#f8f8f2" stroke-width="2.6" fill="none"/><rect x="15" y="19" width="9" height="2.8" fill="#f8f8f2"/></svg>
<span class="tx" style="position:absolute;top:973.49px;font-family:'Liberation Sans', sans-serif;font-size:28.84px;line-height:28.84px;color:#f8f8f2;white-space:pre;letter-spacing:-1.706px;left:743.3px;">Log</span>
<span class="tx" style="position:absolute;top:973.49px;font-family:'Liberation Sans', sans-serif;font-size:28.84px;line-height:28.84px;color:#bbbbc4;white-space:pre;letter-spacing:-0.309px;left:831px;">[12:49:11 PM GMT+03:00]</span>
<svg style="position:absolute;left:1176px;top:972px;" width="30" height="31" viewBox="0 0 30 31" fill="none"><path d="M17.5 1.5 L4 17.5 H13 L9.5 29.5 L25 12.5 H16 Z" fill="#ecf28e"/></svg>
<span class="tx" style="position:absolute;top:973.49px;font-family:'Liberation Sans', sans-serif;font-size:28.84px;line-height:28.84px;color:#bbbbc4;white-space:pre;letter-spacing:0.241px;left:1215.4px;">40 rows in 211ms</span>
<span class="tx" style="position:absolute;top:973.49px;font-family:'Liberation Sans', sans-serif;font-size:28.84px;line-height:28.84px;color:#f8f8f2;white-space:pre;letter-spacing:-0.883px;left:1465px;">Execute:</span>
<span class="tx" style="position:absolute;top:973.49px;font-family:'Liberation Sans', sans-serif;font-size:28.84px;line-height:28.84px;color:#f5b97a;white-space:pre;letter-spacing:-0.308px;left:1580.7px;">2.38ms</span>
<span class="tx" style="position:absolute;top:973.49px;font-family:'Liberation Sans', sans-serif;font-size:28.84px;line-height:28.84px;color:#f8f8f2;white-space:pre;letter-spacing:0.522px;left:1685.8px;">Network:</span>
<span class="tx" style="position:absolute;top:973.49px;font-family:'Liberation Sans', sans-serif;font-size:28.84px;line-height:28.84px;color:#f5b97a;white-space:pre;letter-spacing:-0.230px;left:1811.7px;">208.62ms</span>
<span class="tx" style="position:absolute;top:973.49px;font-family:'Liberation Sans', sans-serif;font-size:28.84px;line-height:28.84px;color:#f8f8f2;white-space:pre;letter-spacing:-0.143px;left:1948.5px;">Total:</span>
<span class="tx" style="position:absolute;top:973.49px;font-family:'Liberation Sans', sans-serif;font-size:28.84px;line-height:28.84px;color:#f5b97a;white-space:pre;letter-spacing:0.350px;left:2026px;">211ms</span>
<span class="tx" style="position:absolute;top:975.29px;font-family:'Liberation Sans', sans-serif;font-size:27.3px;line-height:27.3px;color:#bbbbc4;white-space:pre;letter-spacing:-0.313px;left:2143px;">Count: 0</span>
<span class="tx" style="position:absolute;top:975.29px;font-family:'Liberation Sans', sans-serif;font-size:27.3px;line-height:27.3px;color:#bbbbc4;white-space:pre;letter-spacing:0.072px;left:2254.6px;">Authentication: 408ns</span>
<span class="tx" style="position:absolute;top:975.29px;font-family:'Liberation Sans', sans-serif;font-size:27.3px;line-height:27.3px;color:#bbbbc4;white-space:pre;letter-spacing:-0.231px;left:2529.6px;">Compile: 0</span>
<div style="position:absolute;left:2688px;top:957px;width:42px;height:60px;background:#45475a;border-radius:7px;border-top-right-radius:0;border-bottom-right-radius:0;"></div>
<div style="position:absolute;left:0;top:0;width:2940px;height:1522px;clip-path:inset(957px 210px 505px 2688px)">
<svg style="position:absolute;left:2704px;top:972px;" width="30" height="30" viewBox="0 0 30 30" fill="none"><rect x="8.8" y="3.4" width="17" height="18.6" stroke="#f8f8f2" stroke-width="2.7" fill="#2b2c39"/><rect x="3.4" y="8.4" width="17" height="19.4" stroke="#f8f8f2" stroke-width="2.7" fill="#45475a"/></svg>
</div>
<div style="position:absolute;left:2750px;top:957px;width:80px;height:60px;background:#45475a;border-radius:8px;"></div>
<svg style="position:absolute;left:2778px;top:978px;" width="24" height="17" viewBox="0 0 24 17" fill="none"><path d="M3 13.5 L12 4.5 L21 13.5" stroke="#f8f8f2" stroke-width="3" fill="none" stroke-linecap="butt" stroke-linejoin="miter"/></svg>
<div style="position:absolute;left:90px;top:1036px;width:2760px;height:82px;background:#272833;border-radius:0px;"></div>
<span class="tx" style="position:absolute;top:1060.11px;font-family:'Liberation Sans', sans-serif;font-size:29.87px;line-height:29.87px;color:#f8f8f2;white-space:pre;letter-spacing:-0.593px;left:2248px;">40 rows</span>
<svg style="position:absolute;left:2386px;top:1061px;" width="38" height="29" viewBox="0 0 38 29" fill="none"><rect x="1.8" y="1.5" width="34" height="25.5" rx="3.5" stroke="#c8c8cc" stroke-width="2.6" fill="none"/><path d="M7.4 20 V7.2 L12 13.2 L16.6 7.2 V20" stroke="#c8c8cc" stroke-width="2.6" fill="none" stroke-linejoin="round"/><path d="M24.5 6.2 V19 M19.8 14.2 L24.5 19 L29.2 14.2" stroke="#c8c8cc" stroke-width="2.6" fill="none" stroke-linejoin="round"/></svg>
<svg style="position:absolute;left:2460px;top:1060px;" width="31" height="31" viewBox="0 0 31 31" fill="none"><path d="M10 1.8 H4 A2.6 2.6 0 0 0 1.5 4.4 V26 A2.6 2.6 0 0 0 4 28.5 H10 Z" stroke="#c8c8cc" stroke-width="2.6" fill="none"/><path d="M11.5 0.8 H18.4 V9.5 H11.5 Z M19.6 0.8 H26 A3 3 0 0 1 29 3.8 V9.5 H19.6 Z M11.5 10.6 H18.4 V19 H11.5 Z M19.6 10.6 H29 V19 H19.6 Z M11.5 20.1 H18.4 V29 H11.5 Z M19.6 20.1 H29 V26 A3 3 0 0 1 26 29 H19.6 Z" fill="#c8c8cc"/></svg>
<svg style="position:absolute;left:2531px;top:1060px;" width="40" height="33" viewBox="0 0 40 33" fill="none"><path d="M21 5 H5 A3.2 3.2 0 0 0 5 11.6 H17.5" stroke="#c8c8cc" stroke-width="3" fill="none" stroke-linejoin="round"/><path d="M21 4.6 C26 2 33 2.6 35.6 8 C37.6 12.5 37.6 22 35.4 26.6 C33.4 30.4 28 31 23 30.6" stroke="#c8c8cc" stroke-width="3" fill="none"/><rect x="15.5" y="11.6" width="9.5" height="5.4" rx="2.7" stroke="#c8c8cc" stroke-width="2.8"/><rect x="15.5" y="17.4" width="9.5" height="5.4" rx="2.7" stroke="#c8c8cc" stroke-width="2.8"/><rect x="16.5" y="23.2" width="9" height="6" rx="3" stroke="#c8c8cc" stroke-width="2.8"/><path d="M24 11.5 C27 9 29 13 27.5 17" stroke="#c8c8cc" stroke-width="2.6" fill="none"/></svg>
<svg style="position:absolute;left:2614px;top:1058px;" width="32" height="34" viewBox="0 0 32 34" fill="none"><path d="M3.8 18 A12.2 12.2 0 1 0 16 5.8" stroke="#c8c8cc" stroke-width="2.9" fill="none"/><path d="M17.5 0.8 V11 L10 5.9 Z" fill="#c8c8cc"/><circle cx="16" cy="18" r="4.3" fill="#c8c8cc"/></svg>
<svg style="position:absolute;left:2692px;top:1058px;" width="36" height="34" viewBox="0 0 36 34" fill="none"><path d="M12.86 4.96 A13.2 13.2 0 0 1 30.71 19.94 M24.00 28.85 A13.2 13.2 0 0 1 4.89 14.46" stroke="#c8c8cc" stroke-width="3.0" fill="none"/><path d="M28.88 23.77 L34.93 17.39 L25.94 15.48 Z M6.72 10.63 L0.67 17.01 L9.66 18.92 Z" fill="#c8c8cc"/></svg>
<svg style="position:absolute;left:2774px;top:1060px;" width="32" height="29" viewBox="0 0 32 29" fill="none"><path d="M2 13.5 V26.2 H30 V13.5" stroke="#c8c8cc" stroke-width="3.2" fill="none"/><path d="M16 1 V13" stroke="#c8c8cc" stroke-width="3" fill="none"/><path d="M9 10.5 H23 L16 18 Z" fill="#c8c8cc"/></svg>
<div style="position:absolute;left:90px;top:1118px;width:2760px;height:394px;background:#282a37;border-radius:0px;"></div>
<div style="position:absolute;left:91px;top:1119px;width:2116px;height:113px;background:#21222c;border-radius:0px;"></div>
<div style="position:absolute;left:91px;top:1290px;width:2116px;height:2px;background:#3b3d4d;border-radius:0px;"></div>
<div style="position:absolute;left:91px;top:1350px;width:2116px;height:2px;background:#3b3d4d;border-radius:0px;"></div>
<div style="position:absolute;left:91px;top:1410px;width:2116px;height:2px;background:#3b3d4d;border-radius:0px;"></div>
<div style="position:absolute;left:91px;top:1470px;width:2116px;height:2px;background:#3b3d4d;border-radius:0px;"></div>
<div style="position:absolute;left:91px;top:1231px;width:0;height:281px;border-left:2px dotted #3c3e50"></div>
<div style="position:absolute;left:610px;top:1231px;width:0;height:281px;border-left:2px dotted #3c3e50"></div>
<div style="position:absolute;left:842px;top:1231px;width:0;height:281px;border-left:2px dotted #3c3e50"></div>
<div style="position:absolute;left:1034px;top:1231px;width:0;height:281px;border-left:2px dotted #3c3e50"></div>
<div style="position:absolute;left:1246px;top:1231px;width:0;height:281px;border-left:2px dotted #3c3e50"></div>
<div style="position:absolute;left:1555px;top:1231px;width:0;height:281px;border-left:2px dotted #3c3e50"></div>
<div style="position:absolute;left:1862px;top:1231px;width:0;height:281px;border-left:2px dotted #3c3e50"></div>
<div style="position:absolute;left:2206px;top:1231px;width:0;height:281px;border-left:2px dotted #3c3e50"></div>
<div style="position:absolute;left:608px;top:1161px;width:0;height:52px;border-left:2px dashed #6a6aa0"></div>
<div style="position:absolute;left:840.5px;top:1161px;width:0;height:52px;border-left:2px dashed #6a6aa0"></div>
<div style="position:absolute;left:1032px;top:1161px;width:0;height:52px;border-left:2px dashed #6a6aa0"></div>
<div style="position:absolute;left:1244px;top:1161px;width:0;height:52px;border-left:2px dashed #6a6aa0"></div>
<div style="position:absolute;left:1552px;top:1161px;width:0;height:52px;border-left:2px dashed #6a6aa0"></div>
<div style="position:absolute;left:1860px;top:1161px;width:0;height:52px;border-left:2px dashed #6a6aa0"></div>
<div style="position:absolute;left:2205px;top:1161px;width:0;height:52px;border-left:2px dashed #6a6aa0"></div>
<span class="tx" style="position:absolute;top:1150.18px;font-family:'Liberation Sans', sans-serif;font-size:32.96px;line-height:32.96px;color:#98e1f2;white-space:pre;letter-spacing:0.912px;left:439.99999999999994px;">timestamp</span>
<span class="tx" style="position:absolute;top:1191.69px;font-family:'Liberation Sans', sans-serif;font-size:20.6px;line-height:20.6px;color:#bbbbc4;white-space:pre;letter-spacing:0.500px;left:500.29999999999995px;">timestamp</span>
<span class="tx" style="position:absolute;top:1150.18px;font-family:'Liberation Sans', sans-serif;font-size:32.96px;line-height:32.96px;color:#98e1f2;white-space:pre;letter-spacing:0.323px;left:646px;">symbol</span>
<span class="tx" style="position:absolute;top:1191.69px;font-family:'Liberation Sans', sans-serif;font-size:20.6px;line-height:20.6px;color:#bbbbc4;white-space:pre;letter-spacing:0.151px;left:646px;">symbol</span>
<span class="tx" style="position:absolute;top:1150.18px;font-family:'Liberation Sans', sans-serif;font-size:32.96px;line-height:32.96px;color:#98e1f2;white-space:pre;letter-spacing:0.729px;left:948.0px;">open</span>
<span class="tx" style="position:absolute;top:1191.69px;font-family:'Liberation Sans', sans-serif;font-size:20.6px;line-height:20.6px;color:#bbbbc4;white-space:pre;letter-spacing:0.630px;left:958.5px;">double</span>
<span class="tx" style="position:absolute;top:1150.18px;font-family:'Liberation Sans', sans-serif;font-size:32.96px;line-height:32.96px;color:#98e1f2;white-space:pre;letter-spacing:-0.583px;left:1160.4px;">close</span>
<span class="tx" style="position:absolute;top:1191.69px;font-family:'Liberation Sans', sans-serif;font-size:20.6px;line-height:20.6px;color:#bbbbc4;white-space:pre;letter-spacing:0.629px;left:1170px;">double</span>
<span class="tx" style="position:absolute;top:1150.18px;font-family:'Liberation Sans', sans-serif;font-size:32.96px;line-height:32.96px;color:#98e1f2;white-space:pre;letter-spacing:0.380px;left:1393.8999999999999px;">min(price)</span>
<span class="tx" style="position:absolute;top:1191.69px;font-family:'Liberation Sans', sans-serif;font-size:20.6px;line-height:20.6px;color:#bbbbc4;white-space:pre;letter-spacing:0.631px;left:1478.8px;">double</span>
<span class="tx" style="position:absolute;top:1150.18px;font-family:'Liberation Sans', sans-serif;font-size:32.96px;line-height:32.96px;color:#98e1f2;white-space:pre;letter-spacing:0.196px;left:1694.3999999999999px;">max(price)</span>
<span class="tx" style="position:absolute;top:1191.69px;font-family:'Liberation Sans', sans-serif;font-size:20.6px;line-height:20.6px;color:#bbbbc4;white-space:pre;letter-spacing:0.631px;left:1786.8px;">double</span>
<span class="tx" style="position:absolute;top:1150.18px;font-family:'Liberation Sans', sans-serif;font-size:32.96px;line-height:32.96px;color:#98e1f2;white-space:pre;letter-spacing:0.913px;left:2086.7px;">volume</span>
<span class="tx" style="position:absolute;top:1191.69px;font-family:'Liberation Sans', sans-serif;font-size:20.6px;line-height:20.6px;color:#bbbbc4;white-space:pre;letter-spacing:0.629px;left:2132.5px;">double</span>
<div style="position:absolute;left:0;top:0;width:2940px;height:1522px;clip-path:inset(1118px 90px 10px 90px)">
<span class="tx" style="position:absolute;top:1246.99px;font-family:'Liberation Sans', sans-serif;font-size:28.84px;line-height:28.84px;color:#6ee87f;white-space:pre;letter-spacing:-0.328px;right:2341.6px;">2025-07-08T00:00:00.000000Z</span>
<span class="tx" style="position:absolute;top:1246.99px;font-family:'Liberation Sans', sans-serif;font-size:28.84px;line-height:28.84px;color:#f8f8f2;white-space:pre;letter-spacing:-2.564px;left:623px;">BTC-USDT</span>
<span class="tx" style="position:absolute;top:1246.99px;font-family:'Liberation Sans', sans-serif;font-size:28.84px;line-height:28.84px;color:#f8f8f2;white-space:pre;letter-spacing:-0.083px;right:1919px;">108262.1</span>
<span class="tx" style="position:absolute;top:1246.99px;font-family:'Liberation Sans', sans-serif;font-size:28.84px;line-height:28.84px;color:#f8f8f2;white-space:pre;letter-spacing:-0.083px;right:1704.3px;">108275.2</span>
<span class="tx" style="position:absolute;top:1246.99px;font-family:'Liberation Sans', sans-serif;font-size:28.84px;line-height:28.84px;color:#f8f8f2;white-space:pre;letter-spacing:-0.083px;right:1396.5px;">108192.0</span>
<span class="tx" style="position:absolute;top:1246.99px;font-family:'Liberation Sans', sans-serif;font-size:28.84px;line-height:28.84px;color:#f8f8f2;white-space:pre;letter-spacing:-0.083px;right:1088.5px;">108296.0</span>
<span class="tx" style="position:absolute;top:1246.99px;font-family:'Liberation Sans', sans-serif;font-size:28.84px;line-height:28.84px;color:#f8f8f2;white-space:pre;letter-spacing:-0.080px;right:744.8000000000002px;">12.967416359999946</span>
<span class="tx" style="position:absolute;top:1306.99px;font-family:'Liberation Sans', sans-serif;font-size:28.84px;line-height:28.84px;color:#6ee87f;white-space:pre;letter-spacing:-0.328px;right:2341.6px;">2025-07-08T00:15:00.000000Z</span>
<span class="tx" style="position:absolute;top:1306.99px;font-family:'Liberation Sans', sans-serif;font-size:28.84px;line-height:28.84px;color:#f8f8f2;white-space:pre;letter-spacing:-2.564px;left:623px;">BTC-USDT</span>
<span class="tx" style="position:absolute;top:1306.99px;font-family:'Liberation Sans', sans-serif;font-size:28.84px;line-height:28.84px;color:#f8f8f2;white-space:pre;letter-spacing:-0.083px;right:1919px;">108275.2</span>
<span class="tx" style="position:absolute;top:1306.99px;font-family:'Liberation Sans', sans-serif;font-size:28.84px;line-height:28.84px;color:#f8f8f2;white-space:pre;letter-spacing:-0.083px;right:1704.3px;">108424.9</span>
<span class="tx" style="position:absolute;top:1306.99px;font-family:'Liberation Sans', sans-serif;font-size:28.84px;line-height:28.84px;color:#f8f8f2;white-space:pre;letter-spacing:-0.083px;right:1396.5px;">108190.1</span>
<span class="tx" style="position:absolute;top:1306.99px;font-family:'Liberation Sans', sans-serif;font-size:28.84px;line-height:28.84px;color:#f8f8f2;white-space:pre;letter-spacing:-0.083px;right:1088.5px;">108425.0</span>
<span class="tx" style="position:absolute;top:1306.99px;font-family:'Liberation Sans', sans-serif;font-size:28.84px;line-height:28.84px;color:#f8f8f2;white-space:pre;letter-spacing:-0.080px;right:744.8000000000002px;">40.1332118699999</span>
<span class="tx" style="position:absolute;top:1366.99px;font-family:'Liberation Sans', sans-serif;font-size:28.84px;line-height:28.84px;color:#6ee87f;white-space:pre;letter-spacing:-0.328px;right:2341.6px;">2025-07-08T00:30:00.000000Z</span>
<span class="tx" style="position:absolute;top:1366.99px;font-family:'Liberation Sans', sans-serif;font-size:28.84px;line-height:28.84px;color:#f8f8f2;white-space:pre;letter-spacing:-2.564px;left:623px;">BTC-USDT</span>
<span class="tx" style="position:absolute;top:1366.99px;font-family:'Liberation Sans', sans-serif;font-size:28.84px;line-height:28.84px;color:#f8f8f2;white-space:pre;letter-spacing:-0.083px;right:1919px;">108425.0</span>
<span class="tx" style="position:absolute;top:1366.99px;font-family:'Liberation Sans', sans-serif;font-size:28.84px;line-height:28.84px;color:#f8f8f2;white-space:pre;letter-spacing:-0.083px;right:1704.3px;">108526.5</span>
<span class="tx" style="position:absolute;top:1366.99px;font-family:'Liberation Sans', sans-serif;font-size:28.84px;line-height:28.84px;color:#f8f8f2;white-space:pre;letter-spacing:-0.083px;right:1396.5px;">108306.4</span>
<span class="tx" style="position:absolute;top:1366.99px;font-family:'Liberation Sans', sans-serif;font-size:28.84px;line-height:28.84px;color:#f8f8f2;white-space:pre;letter-spacing:-0.083px;right:1088.5px;">108527.5</span>
<span class="tx" style="position:absolute;top:1366.99px;font-family:'Liberation Sans', sans-serif;font-size:28.84px;line-height:28.84px;color:#f8f8f2;white-space:pre;letter-spacing:-0.080px;right:744.8000000000002px;">37.67478545999995</span>
<span class="tx" style="position:absolute;top:1426.99px;font-family:'Liberation Sans', sans-serif;font-size:28.84px;line-height:28.84px;color:#6ee87f;white-space:pre;letter-spacing:-0.328px;right:2341.6px;">2025-07-08T00:45:00.000000Z</span>
<span class="tx" style="position:absolute;top:1426.99px;font-family:'Liberation Sans', sans-serif;font-size:28.84px;line-height:28.84px;color:#f8f8f2;white-space:pre;letter-spacing:-2.564px;left:623px;">BTC-USDT</span>
<span class="tx" style="position:absolute;top:1426.99px;font-family:'Liberation Sans', sans-serif;font-size:28.84px;line-height:28.84px;color:#f8f8f2;white-space:pre;letter-spacing:-0.083px;right:1919px;">108526.5</span>
<span class="tx" style="position:absolute;top:1426.99px;font-family:'Liberation Sans', sans-serif;font-size:28.84px;line-height:28.84px;color:#f8f8f2;white-space:pre;letter-spacing:-0.083px;right:1704.3px;">108292.7</span>
<span class="tx" style="position:absolute;top:1426.99px;font-family:'Liberation Sans', sans-serif;font-size:28.84px;line-height:28.84px;color:#f8f8f2;white-space:pre;letter-spacing:-0.083px;right:1396.5px;">108188.0</span>
<span class="tx" style="position:absolute;top:1426.99px;font-family:'Liberation Sans', sans-serif;font-size:28.84px;line-height:28.84px;color:#f8f8f2;white-space:pre;letter-spacing:-0.083px;right:1088.5px;">108526.6</span>
<span class="tx" style="position:absolute;top:1426.99px;font-family:'Liberation Sans', sans-serif;font-size:28.84px;line-height:28.84px;color:#f8f8f2;white-space:pre;letter-spacing:-0.080px;right:744.8000000000002px;">54.82547872000126</span>
<span class="tx" style="position:absolute;top:1486.99px;font-family:'Liberation Sans', sans-serif;font-size:28.84px;line-height:28.84px;color:#6ee87f;white-space:pre;letter-spacing:-0.328px;right:2341.6px;">2025-07-08T01:00:00.000000Z</span>
<span class="tx" style="position:absolute;top:1486.99px;font-family:'Liberation Sans', sans-serif;font-size:28.84px;line-height:28.84px;color:#f8f8f2;white-space:pre;letter-spacing:-2.564px;left:623px;">BTC-USDT</span>
<span class="tx" style="position:absolute;top:1486.99px;font-family:'Liberation Sans', sans-serif;font-size:28.84px;line-height:28.84px;color:#f8f8f2;white-space:pre;letter-spacing:-0.083px;right:1919px;">108292.8</span>
<span class="tx" style="position:absolute;top:1486.99px;font-family:'Liberation Sans', sans-serif;font-size:28.84px;line-height:28.84px;color:#f8f8f2;white-space:pre;letter-spacing:-0.083px;right:1704.3px;">108164.1</span>
<span class="tx" style="position:absolute;top:1486.99px;font-family:'Liberation Sans', sans-serif;font-size:28.84px;line-height:28.84px;color:#f8f8f2;white-space:pre;letter-spacing:-0.083px;right:1396.5px;">108127.1</span>
<span class="tx" style="position:absolute;top:1486.99px;font-family:'Liberation Sans', sans-serif;font-size:28.84px;line-height:28.84px;color:#f8f8f2;white-space:pre;letter-spacing:-0.083px;right:1088.5px;">108292.8</span>
<span class="tx" style="position:absolute;top:1486.99px;font-family:'Liberation Sans', sans-serif;font-size:28.84px;line-height:28.84px;color:#f8f8f2;white-space:pre;letter-spacing:-0.080px;right:744.8000000000002px;">18.780972389999928</span>
</div>
</body></html>
